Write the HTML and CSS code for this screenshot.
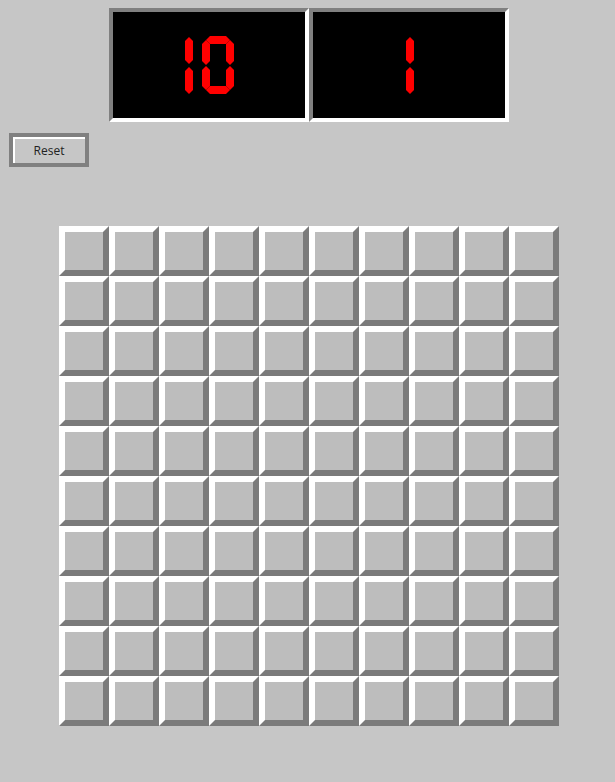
FILE: index.html
```html
<!DOCTYPE html>
<html>
<head>
<meta charset="utf-8">
<link rel="stylesheet" href="styles.css">
</head>
<body>
<div class="app">
  <div class="displays">
    <div class="display">
      <svg class="digit one" width="8" height="60" viewBox="0 0 8 60"><g fill="#ff0000"><polygon points="0,6 4,2 8,6 8,25 4,29 0,25"/><polygon points="0,36 4,32 8,36 8,55 4,59 0,55"/></g></svg>
      <svg class="digit zero" width="32" height="60" viewBox="0 0 32 60"><g fill="#ff0000"><polygon points="4,5 8,1 24,1 28,5 24,9 8,9"/><polygon points="0,9 4,5 8,9 8,26 4,30 0,26"/><polygon points="24,9 28,5 32,9 32,26 28,30 24,26"/><polygon points="0,35 4,31 8,35 8,51 4,55 0,51"/><polygon points="24,35 28,31 32,35 32,51 28,55 24,51"/><polygon points="4,55 8,51 24,51 28,55 24,59 8,59"/></g></svg>
    </div>
    <div class="display">
      <svg class="digit one" width="8" height="60" viewBox="0 0 8 60"><g fill="#ff0000"><polygon points="0,6 4,2 8,6 8,25 4,29 0,25"/><polygon points="0,36 4,32 8,36 8,55 4,59 0,55"/></g></svg>
    </div>
  </div>
  <button class="reset">Reset</button>
  <div class="board" id="board"></div>
</div>
<script>
  var b = document.getElementById('board');
  for (var i = 0; i < 100; i++) {
    var c = document.createElement('div');
    c.className = 'cell';
    b.appendChild(c);
  }
</script>
</body>
</html>
```
FILE: styles.css
```css
html, body {
  margin: 0;
  padding: 0;
  background: #c6c6c6;
}
.app {
  width: 600px;
  padding: 8px 0 0 9px;
  display: flex;
  flex-direction: column;
}
.displays {
  display: flex;
  justify-content: center;
}
.display {
  width: 200px;
  height: 114px;
  box-sizing: border-box;
  background: #000;
  border: 4px solid;
  border-color: #808080 #ffffff #ffffff #808080;
  display: flex;
  align-items: center;
  justify-content: center;
  gap: 8px;
}
.digit {
  display: block;
  margin-left: 1px;
}
.reset {
  align-self: flex-start;
  margin-top: 11px;
  width: 80px;
  height: 34px;
  box-sizing: border-box;
  border: 4px solid #808080;
  box-shadow: inset 2px 2px 0 #ffffff;
  background: #c6c6c6;
  font-family: "Open Sans", "Noto Sans", sans-serif;
  font-size: 12px;
  color: #222;
  padding: 0;
  margin-left: 0;
}
.board {
  align-self: center;
  margin-top: 59px;
  display: grid;
  grid-template-columns: repeat(10, 50px);
  grid-auto-rows: 50px;
}
.cell {
  box-sizing: border-box;
  border: 6px solid;
  border-color: #ffffff #7b7b7b #7b7b7b #ffffff;
  background: #bdbdbd;
}
```
